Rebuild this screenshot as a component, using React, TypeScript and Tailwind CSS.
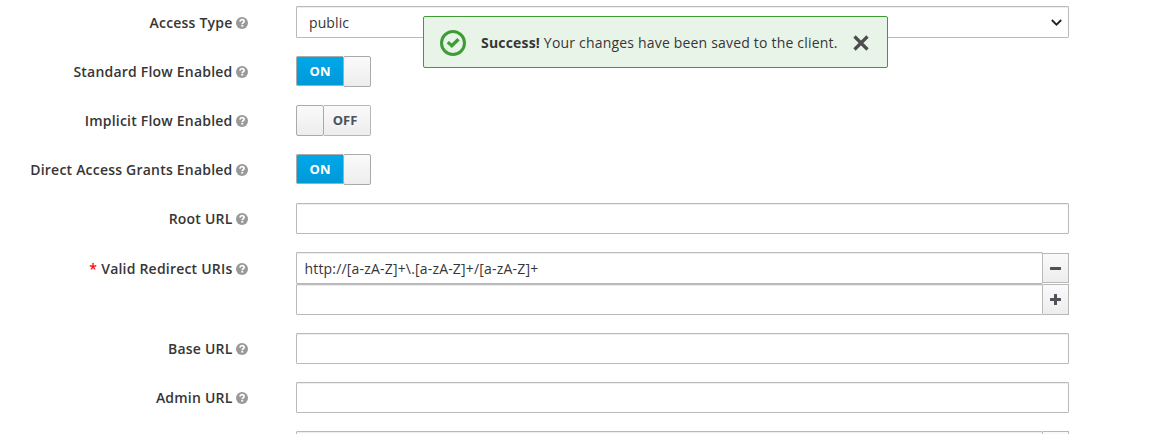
import type { ReactNode } from "react";

function HelpIcon() {
  return (
    <svg className="ml-[3.5px] size-3 shrink-0" viewBox="0 0 12 12" aria-hidden="true">
      <circle cx="6" cy="6" r="6" fill="#999" />
      <path
        d="M3.900 4.600C4.100 3.300 5 2.700 6 2.700c1.200 0 2.100.7 2.100 1.700 0 1.400-1.800 1.300-1.800 2.600"
        fill="none"
        stroke="#fff"
        strokeWidth="1.700"
      />
      <rect x="5.300" y="7.800" width="1.900" height="1.800" fill="#fff" />
    </svg>
  );
}

function Row({
  label,
  required,
  tall,
  children,
}: {
  label: string;
  required?: boolean;
  tall?: boolean;
  children?: ReactNode;
}) {
  return (
    <div className="flex items-start">
      <div
        className={`mr-12 flex w-[248px] shrink-0 items-center justify-end text-[14px] font-semibold tracking-[0.21px] whitespace-nowrap ${
          tall ? "h-[33px]" : "h-[31px]"
        }`}
      >
        {required && <span className="mr-1 text-[#f00]">*</span>}
        <span>{label}</span>
        <HelpIcon />
      </div>
      <div className="w-[773px]">{children}</div>
    </div>
  );
}

const field =
  "block w-full rounded-[1px] border border-[#bababa] bg-white shadow-[inset_0_1px_1px_rgba(3,3,3,0.075)] outline-none";

function TextField({ label }: { label: string }) {
  return (
    <Row label={label}>
      <input aria-label={label} className={`${field} h-[31px] px-2`} />
    </Row>
  );
}

function Toggle({ on }: { on?: boolean }) {
  return on ? (
    <button type="button" className="flex h-[31px] w-[75px] rounded-[2px] text-[13px] font-bold">
      <span className="flex h-[30px] w-[47px] items-center justify-center rounded-l-[2px] border border-r-0 border-[#aaa] bg-linear-to-b from-[#00a8e9] to-[#0099d8] pt-[2px] text-white">
        ON
      </span>
      <span className="h-[31px] w-7 rounded-[2px] border border-[#aaa] bg-linear-to-b from-[#fafafa] to-[#ededed]" />
    </button>
  ) : (
    <button type="button" className="flex h-[31px] w-[75px] rounded-[2px] text-[13px] font-bold">
      <span className="h-[31px] w-7 rounded-[2px] border border-[#aaa] bg-linear-to-b from-[#fafafa] to-[#ededed]" />
      <span className="flex h-[31px] w-[47px] items-center justify-center rounded-r-[2px] border border-l-0 border-[#b7b7b7] bg-linear-to-b from-[#fafafa] to-[#ededed] pr-1 text-[#4d5258]">
        OFF
      </span>
    </button>
  );
}

function AddonButton({ kind }: { kind: "plus" | "minus" }) {
  return (
    <button
      type="button"
      aria-label={kind === "plus" ? "Add" : "Remove"}
      className={`flex w-[26px] shrink-0 items-center justify-center border border-l-0 border-[#b7b7b7] bg-linear-to-b from-[#fafafa] to-[#ededed] ${
        kind === "plus" ? "h-[31px]" : "mt-px h-[30px]"
      }`}
    >
      <svg className="size-[11px]" viewBox="0 0 11 11" fill="#4d5258">
        <rect y="4" width="11" height="3" rx=".5" />
        {kind === "plus" && <rect x="4" width="3" height="11" rx=".5" />}
      </svg>
    </button>
  );
}

function Toast() {
  return (
    <div
      role="alert"
      className="absolute top-4 left-[423px] flex h-[52px] w-[465px] items-center rounded-[2px] border border-[#3f9c35] bg-[#e9f4e9] pl-4 text-[14px] tracking-[0.19px]"
    >
      <svg className="mt-px size-[26px] shrink-0" viewBox="0 0 26 26" fill="none" stroke="#3f9c35" aria-hidden="true">
        <circle cx="13" cy="13" r="11.500" strokeWidth="3" />
        <path d="M7.800 12.100l4 3.700 6.700-6.500" strokeWidth="3.300" />
      </svg>
      <span className="ml-[15px] whitespace-nowrap">
        <strong className="font-bold">Success!</strong> Your changes have been saved to the client.
      </span>
      <button type="button" aria-label="Close" className="absolute top-[18px] left-[429px]">
        <svg className="size-4" viewBox="0 0 16 16" fill="none" stroke="#4d4d4d" strokeWidth="3.200">
          <path d="M1.500 1.500l13 13M14.500 1.500l-13 13" />
        </svg>
      </button>
    </div>
  );
}

export default function App() {
  return (
    <div className="relative h-[434px] w-[1168px] overflow-hidden bg-white font-['Open_Sans',sans-serif] text-[#363636]">
      <form className="flex flex-col pt-[6px]">
        <div className="h-[50px]">
          <Row label="Access Type" tall>
            <div className={`${field} flex h-8 items-center justify-between pr-[6px] pl-3 text-[14px] tracking-[0.1px]`}>
              <span>public</span>
              <svg className="size-[11px]" viewBox="0 0 11 11" fill="none" stroke="#222" strokeWidth="1.800">
                <path d="M.8 3l4.700 4.700L10.200 3" />
              </svg>
            </div>
          </Row>
        </div>
        <div className="h-[49px]">
          <Row label="Standard Flow Enabled">
            <Toggle on />
          </Row>
        </div>
        <div className="h-[49px]">
          <Row label="Implicit Flow Enabled">
            <Toggle />
          </Row>
        </div>
        <div className="h-[49px]">
          <Row label="Direct Access Grants Enabled">
            <Toggle on />
          </Row>
        </div>
        <div className="h-[49px]">
          <TextField label="Root URL" />
        </div>
        <div className="h-[81px]">
          <Row label="Valid Redirect URIs" required tall>
            <div className="flex">
              <input
                aria-label="Valid Redirect URI"
                defaultValue="http://[a-zA-Z]+\.[a-zA-Z]+/[a-zA-Z]+"
                className={`${field} h-8 px-[7.5px] text-[14px] tracking-[0.18px]`}
              />
              <AddonButton kind="minus" />
            </div>
            <div className="flex">
              <input aria-label="New redirect URI" className={`${field} h-[31px] px-2`} />
              <AddonButton kind="plus" />
            </div>
          </Row>
        </div>
        <div className="h-[49px]">
          <TextField label="Base URL" />
        </div>
        <div className="h-[49px]">
          <TextField label="Admin URL" />
        </div>
        <div className="ml-[296px] flex w-[773px]">
          <input aria-label="Web origin" className={`${field} h-[31px] px-2`} />
          <AddonButton kind="plus" />
        </div>
      </form>
      <Toast />
    </div>
  );
}
